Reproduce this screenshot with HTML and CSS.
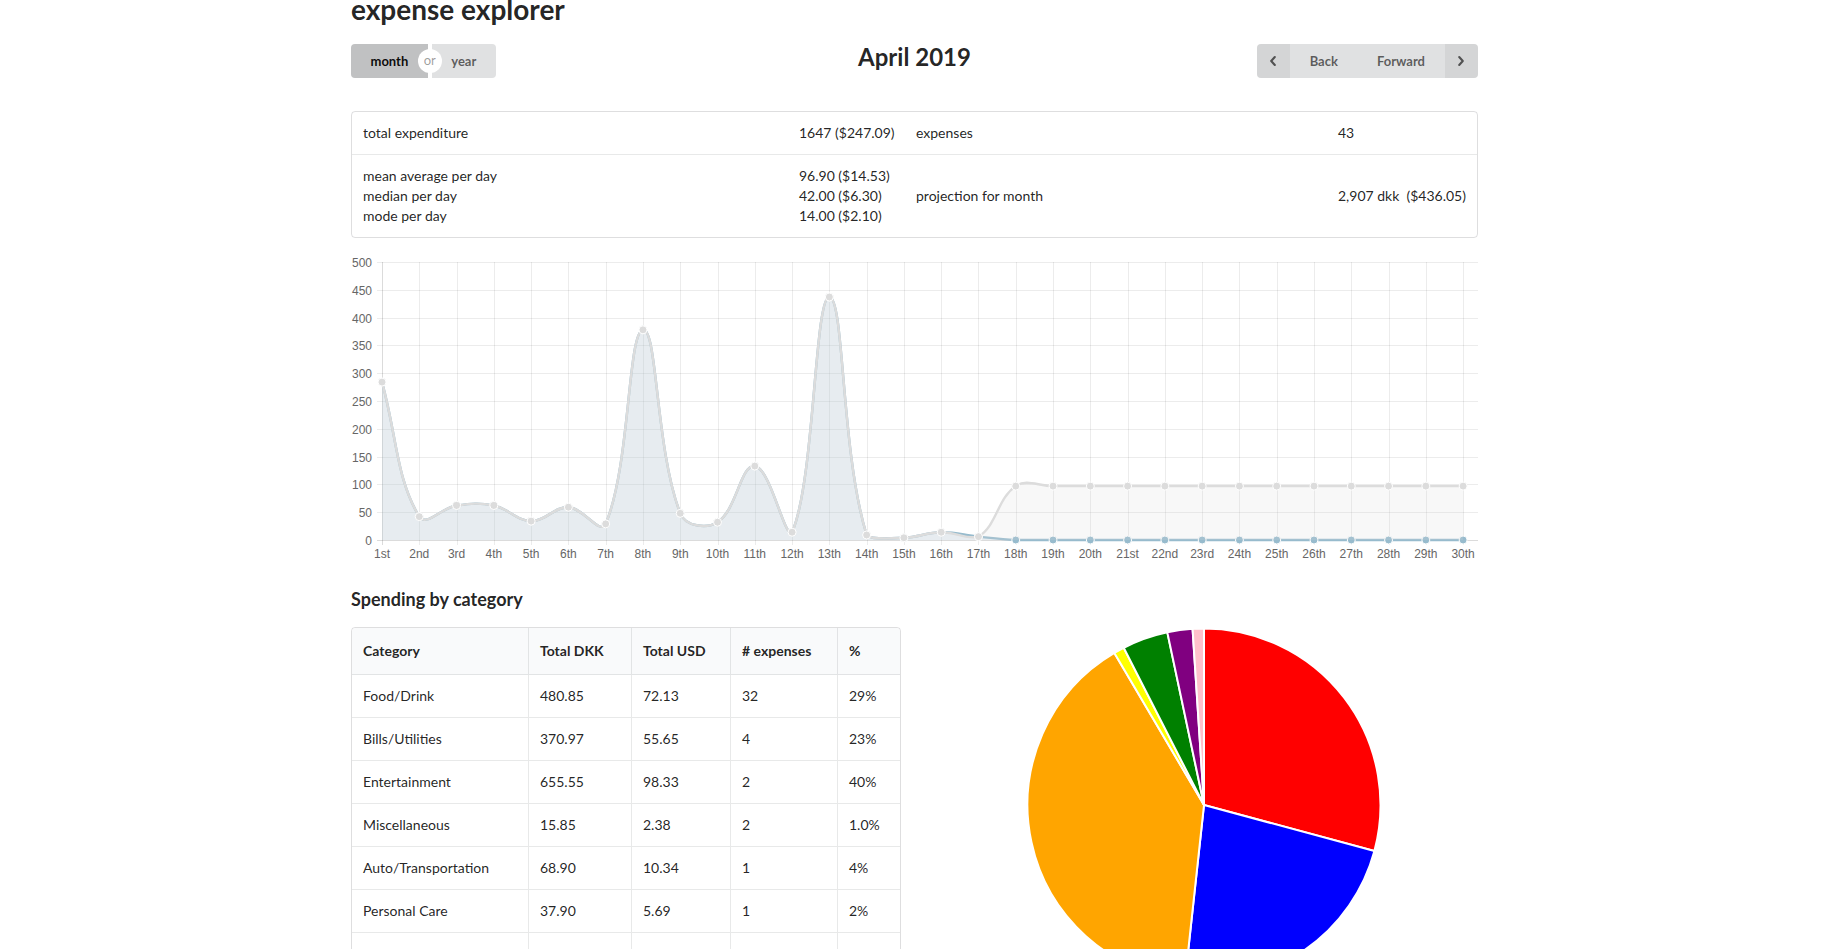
FILE: index.html
```html
<!DOCTYPE html>
<html lang="en">
<head>
<meta charset="utf-8">
<title>expense explorer</title>
<link rel="stylesheet" href="styles.css">
</head>
<body>
<div class="container">
  <h1 class="page-title">expense explorer</h1>

  <div class="toolbar">
    <div class="period-toggle">
      <button class="btn active">month</button>
      <div class="or"><span>or</span></div>
      <button class="btn">year</button>
    </div>
    <h2 class="month-title">April 2019</h2>
    <div class="nav-buttons">
      <button class="btn nav-back">
        <span class="icon-box"><svg width="8" height="12" viewBox="0 0 8 12"><polyline points="5.8,2 2.2,6 5.8,10" fill="none" stroke="rgba(0,0,0,0.62)" stroke-width="2.1" stroke-linecap="round" stroke-linejoin="round"/></svg></span>
        <span class="btn-label">Back</span>
      </button>
      <button class="btn nav-fwd">
        <span class="btn-label">Forward</span>
        <span class="icon-box"><svg width="8" height="12" viewBox="0 0 8 12"><polyline points="2.2,2 5.8,6 2.2,10" fill="none" stroke="rgba(0,0,0,0.62)" stroke-width="2.1" stroke-linecap="round" stroke-linejoin="round"/></svg></span>
      </button>
    </div>
  </div>

  <table class="stats">
    <colgroup>
      <col class="c-label"><col class="c-value"><col class="c-label2"><col class="c-value2">
    </colgroup>
    <tbody>
      <tr>
        <td>total expenditure</td>
        <td>1647 ($247.09)</td>
        <td>expenses</td>
        <td>43</td>
      </tr>
      <tr>
        <td>mean average per day<br>median per day<br>mode per day</td>
        <td>96.90 ($14.53)<br>42.00 ($6.30)<br>14.00 ($2.10)</td>
        <td>projection for month</td>
        <td>2,907 dkk&nbsp; ($436.05)</td>
      </tr>
    </tbody>
  </table>

  <div class="chart" id="daily-chart"></div>

  <h3 class="section-title">Spending by category</h3>

  <div class="category-row">
    <table class="categories">
      <colgroup>
        <col class="k-cat"><col class="k-dkk"><col class="k-usd"><col class="k-num"><col class="k-pct">
      </colgroup>
      <thead>
        <tr><th>Category</th><th>Total DKK</th><th>Total USD</th><th># expenses</th><th>%</th></tr>
      </thead>
      <tbody>
        <tr><td>Food/Drink</td><td>480.85</td><td>72.13</td><td>32</td><td>29%</td></tr>
        <tr><td>Bills/Utilities</td><td>370.97</td><td>55.65</td><td>4</td><td>23%</td></tr>
        <tr><td>Entertainment</td><td>655.55</td><td>98.33</td><td>2</td><td>40%</td></tr>
        <tr><td>Miscellaneous</td><td>15.85</td><td>2.38</td><td>2</td><td>1.0%</td></tr>
        <tr><td>Auto/Transportation</td><td>68.90</td><td>10.34</td><td>1</td><td>4%</td></tr>
        <tr><td>Personal Care</td><td>37.90</td><td>5.69</td><td>1</td><td>2%</td></tr>
        <tr><td>Shopping</td><td>16.98</td><td>2.55</td><td>1</td><td>1.0%</td></tr>
      </tbody>
    </table>
    <div class="pie-wrap" id="pie-wrap"></div>
  </div>
</div>
<script src="chart.js"></script>
</body>
</html>
```

FILE: styles.css
```css
* { box-sizing: border-box; }

html, body {
  margin: 0;
  padding: 0;
  background: #ffffff;
  overflow: hidden;
}

body {
  font-family: Lato, "Helvetica Neue", Arial, sans-serif;
  font-size: 14px;
  line-height: 20px;
  color: rgba(0, 0, 0, 0.87);
}

.container {
  width: 1127px;
  margin: 0 0 0 calc(50% - 565px);
}

.page-title {
  font-size: 28px;
  font-weight: 700;
  line-height: 36px;
  margin: -9px 0 17px;
}

/* toolbar */
.toolbar {
  display: grid;
  grid-template-columns: 1fr auto 1fr;
  align-items: start;
  height: 34px;
}

.btn {
  font-family: Lato, "Helvetica Neue", Arial, sans-serif;
  font-size: 13px;
  font-weight: 700;
  line-height: 13px;
  height: 34px;
  margin: 0;
  border: 0;
  padding: 0 19.5px;
  background: #e0e1e2;
  color: rgba(0, 0, 0, 0.6);
  display: flex;
  align-items: center;
  cursor: pointer;
}

.period-toggle {
  display: flex;
  justify-self: start;
}

.period-toggle .btn.active {
  background: #c0c1c2;
  color: rgba(0, 0, 0, 0.95);
  border-radius: 4px 0 0 4px;
}

.period-toggle .btn:last-child {
  border-radius: 0 4px 4px 0;
}

.or {
  width: 4px;
  position: relative;
}

.or span {
  position: absolute;
  left: 50%;
  top: 50%;
  width: 24px;
  height: 24px;
  margin: -12px 0 0 -12px;
  border-radius: 50%;
  background: #ffffff;
  color: rgba(0, 0, 0, 0.4);
  font-size: 13px;
  line-height: 23px;
  text-align: center;
  z-index: 2;
}

.month-title {
  font-size: 24px;
  font-weight: 700;
  line-height: 31px;
  margin: -3px 0 0;
}

.nav-buttons {
  display: flex;
  justify-self: end;
}

.nav-buttons .btn {
  padding: 0;
  align-items: stretch;
}

.nav-back { border-radius: 4px 0 0 4px; }
.nav-fwd { border-radius: 0 4px 4px 0; }

.btn-label {
  display: flex;
  align-items: center;
  padding: 0 19.5px;
}

.icon-box {
  width: 33.5px;
  display: flex;
  align-items: center;
  justify-content: center;
  background: rgba(0, 0, 0, 0.05);
}

.nav-back .icon-box { border-radius: 4px 0 0 4px; }
.nav-fwd .icon-box { border-radius: 0 4px 4px 0; }

/* stats table */
.stats {
  width: 1127px;
  margin-top: 33px;
  border: 1px solid rgba(34, 36, 38, 0.15);
  border-radius: 4px;
  border-collapse: separate;
  border-spacing: 0;
  table-layout: fixed;
}

.stats .c-label { width: 436px; }
.stats .c-value { width: 117px; }
.stats .c-label2 { width: 422px; }
.stats .c-value2 { width: 150px; }

.stats td {
  padding: 11px;
  vertical-align: middle;
  line-height: 20px;
  white-space: nowrap;
}

.stats tr + tr td {
  border-top: 1px solid rgba(34, 36, 38, 0.1);
}

/* chart */
.chart {
  margin-top: 12px;
  height: 320px;
}

.chart svg { display: block; }

.section-title {
  font-size: 18px;
  font-weight: 700;
  line-height: 23px;
  margin: 18px 0 16px;
}

/* categories */
.category-row {
  display: flex;
  align-items: flex-start;
}

.categories {
  width: 550px;
  flex: none;
  border: 1px solid rgba(34, 36, 38, 0.15);
  border-radius: 4px;
  border-collapse: separate;
  border-spacing: 0;
  table-layout: fixed;
}

.categories .k-cat { width: 176px; }
.categories .k-dkk { width: 103px; }
.categories .k-usd { width: 99px; }
.categories .k-num { width: 107px; }
.categories .k-pct { width: 63px; }

.categories th {
  background: #f9fafb;
  text-align: left;
  font-weight: 700;
  padding: 13px 11px;
  line-height: 20px;
  border-bottom: 1px solid rgba(34, 36, 38, 0.1);
  white-space: nowrap;
}

.categories th:first-child { border-top-left-radius: 4px; }
.categories th:last-child { border-top-right-radius: 4px; }

.categories td {
  padding: 11px;
  line-height: 20px;
  white-space: nowrap;
}

.categories th + th,
.categories td + td {
  border-left: 1px solid rgba(34, 36, 38, 0.1);
}

.categories tbody tr + tr td {
  border-top: 1px solid rgba(34, 36, 38, 0.1);
}

.pie-wrap {
  flex: 1;
  display: flex;
  justify-content: center;
  padding-left: 28px;
}

.pie-wrap svg { display: block; }

/* svg text */
.axis-label {
  font-family: "Liberation Sans", Arial, Helvetica, sans-serif;
  font-size: 12px;
  fill: #666666;
}
```

FILE: chart.js
```js
(function () {
  var NS = 'http://www.w3.org/2000/svg';

  function el(name, attrs, parent) {
    var e = document.createElementNS(NS, name);
    for (var k in attrs) e.setAttribute(k, attrs[k]);
    if (parent) parent.appendChild(e);
    return e;
  }

  function ord(n) {
    var s = ['th', 'st', 'nd', 'rd'];
    var v = n % 100;
    return n + (s[(v - 20) % 10] || s[v] || s[0]);
  }

  /* ---------- daily line chart ---------- */
  var W = 1127, H = 320;
  var left = 31, step = 37.28, top = 12, bottom = 290, right = 1127;
  var yScale = (bottom - top) / 500;

  var actualDays = [284, 42, 62, 62, 34, 59, 29, 378, 48, 32, 133, 14, 437, 9, 4, 14, 6];
  var actual = [], projected = [];
  for (var i = 0; i < 30; i++) {
    if (i < actualDays.length) {
      actual.push(actualDays[i]);
      projected.push(actualDays[i]);
    } else {
      actual.push(0);
      projected.push(96.9);
    }
  }

  var svg = el('svg', { width: W, height: H, viewBox: '0 0 ' + W + ' ' + H }, document.getElementById('daily-chart'));

  var grid = el('g', {}, svg);
  for (var v = 0; v <= 500; v += 50) {
    var gy = Math.round(bottom - v * yScale) + 0.5;
    el('line', {
      x1: left - 5, x2: right, y1: gy, y2: gy,
      stroke: v === 0 ? 'rgba(0,0,0,0.14)' : 'rgba(0,0,0,0.075)', 'stroke-width': 1
    }, grid);
    var t = el('text', { x: left - 10, y: gy + 4, 'text-anchor': 'end', 'class': 'axis-label' }, svg);
    t.textContent = v;
  }
  for (var d = 0; d < 30; d++) {
    var gx = Math.round(left + d * step) + 0.5;
    el('line', {
      x1: gx, x2: gx, y1: top, y2: bottom + 5,
      stroke: d === 0 ? 'rgba(0,0,0,0.14)' : 'rgba(0,0,0,0.075)', 'stroke-width': 1
    }, grid);
    var tl = el('text', { x: left + d * step, y: 308, 'text-anchor': 'middle', 'class': 'axis-label' }, svg);
    tl.textContent = ord(d + 1);
  }

  function clamp(val, lo, hi) { return Math.max(lo, Math.min(hi, val)); }

  function spline(vals) {
    var pts = vals.map(function (val, idx) {
      return { x: left + idx * step, y: bottom - val * yScale };
    });
    var ctrl = pts.map(function (pt, idx) {
      var prev = pts[idx - 1] || pt;
      var next = pts[idx + 1] || pt;
      var d01 = Math.hypot(pt.x - prev.x, pt.y - prev.y);
      var d12 = Math.hypot(next.x - pt.x, next.y - pt.y);
      var s01 = d01 / (d01 + d12);
      var s12 = d12 / (d01 + d12);
      if (isNaN(s01)) s01 = 0;
      if (isNaN(s12)) s12 = 0;
      var fa = 0.4 * s01, fb = 0.4 * s12;
      return {
        px: clamp(pt.x - fa * (next.x - prev.x), left, right),
        py: clamp(pt.y - fa * (next.y - prev.y), top, bottom),
        nx: clamp(pt.x + fb * (next.x - prev.x), left, right),
        ny: clamp(pt.y + fb * (next.y - prev.y), top, bottom)
      };
    });
    var path = 'M' + pts[0].x.toFixed(2) + ' ' + pts[0].y.toFixed(2);
    for (var j = 1; j < pts.length; j++) {
      path += ' C' + ctrl[j - 1].nx.toFixed(2) + ' ' + ctrl[j - 1].ny.toFixed(2) + ' ' +
        ctrl[j].px.toFixed(2) + ' ' + ctrl[j].py.toFixed(2) + ' ' +
        pts[j].x.toFixed(2) + ' ' + pts[j].y.toFixed(2);
    }
    return { d: path, pts: pts };
  }

  function drawSeries(vals, fill, stroke, pointFill) {
    var s = spline(vals);
    var last = s.pts[s.pts.length - 1], first = s.pts[0];
    el('path', { d: s.d + ' L' + last.x + ' ' + bottom + ' L' + first.x + ' ' + bottom + ' Z', fill: fill, stroke: 'none' }, svg);
    el('path', { d: s.d, fill: 'none', stroke: stroke, 'stroke-width': 2.4 }, svg);
    s.pts.forEach(function (p) {
      el('circle', { cx: p.x, cy: p.y, r: 4, fill: pointFill, stroke: '#ffffff', 'stroke-width': 1 }, svg);
    });
  }

  drawSeries(actual, 'rgba(151,187,205,0.2)', 'rgba(151,187,205,1)', 'rgba(151,187,205,1)');
  drawSeries(projected, 'rgba(220,220,220,0.2)', 'rgba(220,220,220,1)', 'rgba(220,220,220,1)');

  /* ---------- pie chart ---------- */
  var data = [480.85, 370.97, 655.55, 15.85, 68.90, 37.90, 16.98];
  var colors = ['#ff0000', '#0000ff', '#ffa500', '#ffff00', '#008000', '#800080', '#ffc0cb'];
  var size = 356, cx = 178, cy = 178, r = 176.5;
  var pie = el('svg', { width: size, height: size, viewBox: '0 0 ' + size + ' ' + size }, document.getElementById('pie-wrap'));
  var total = data.reduce(function (a, b) { return a + b; }, 0);
  var ang = -Math.PI / 2;
  data.forEach(function (val, idx) {
    var sweep = val / total * Math.PI * 2;
    var a2 = ang + sweep;
    var x1 = cx + r * Math.cos(ang), y1 = cy + r * Math.sin(ang);
    var x2 = cx + r * Math.cos(a2), y2 = cy + r * Math.sin(a2);
    var large = sweep > Math.PI ? 1 : 0;
    var p = 'M' + cx + ' ' + cy + ' L' + x1.toFixed(2) + ' ' + y1.toFixed(2) +
      ' A' + r + ' ' + r + ' 0 ' + large + ' 1 ' + x2.toFixed(2) + ' ' + y2.toFixed(2) + ' Z';
    el('path', { d: p, fill: colors[idx], stroke: '#ffffff', 'stroke-width': 2, 'stroke-linejoin': 'bevel' }, pie);
    ang = a2;
  });
})();
```
